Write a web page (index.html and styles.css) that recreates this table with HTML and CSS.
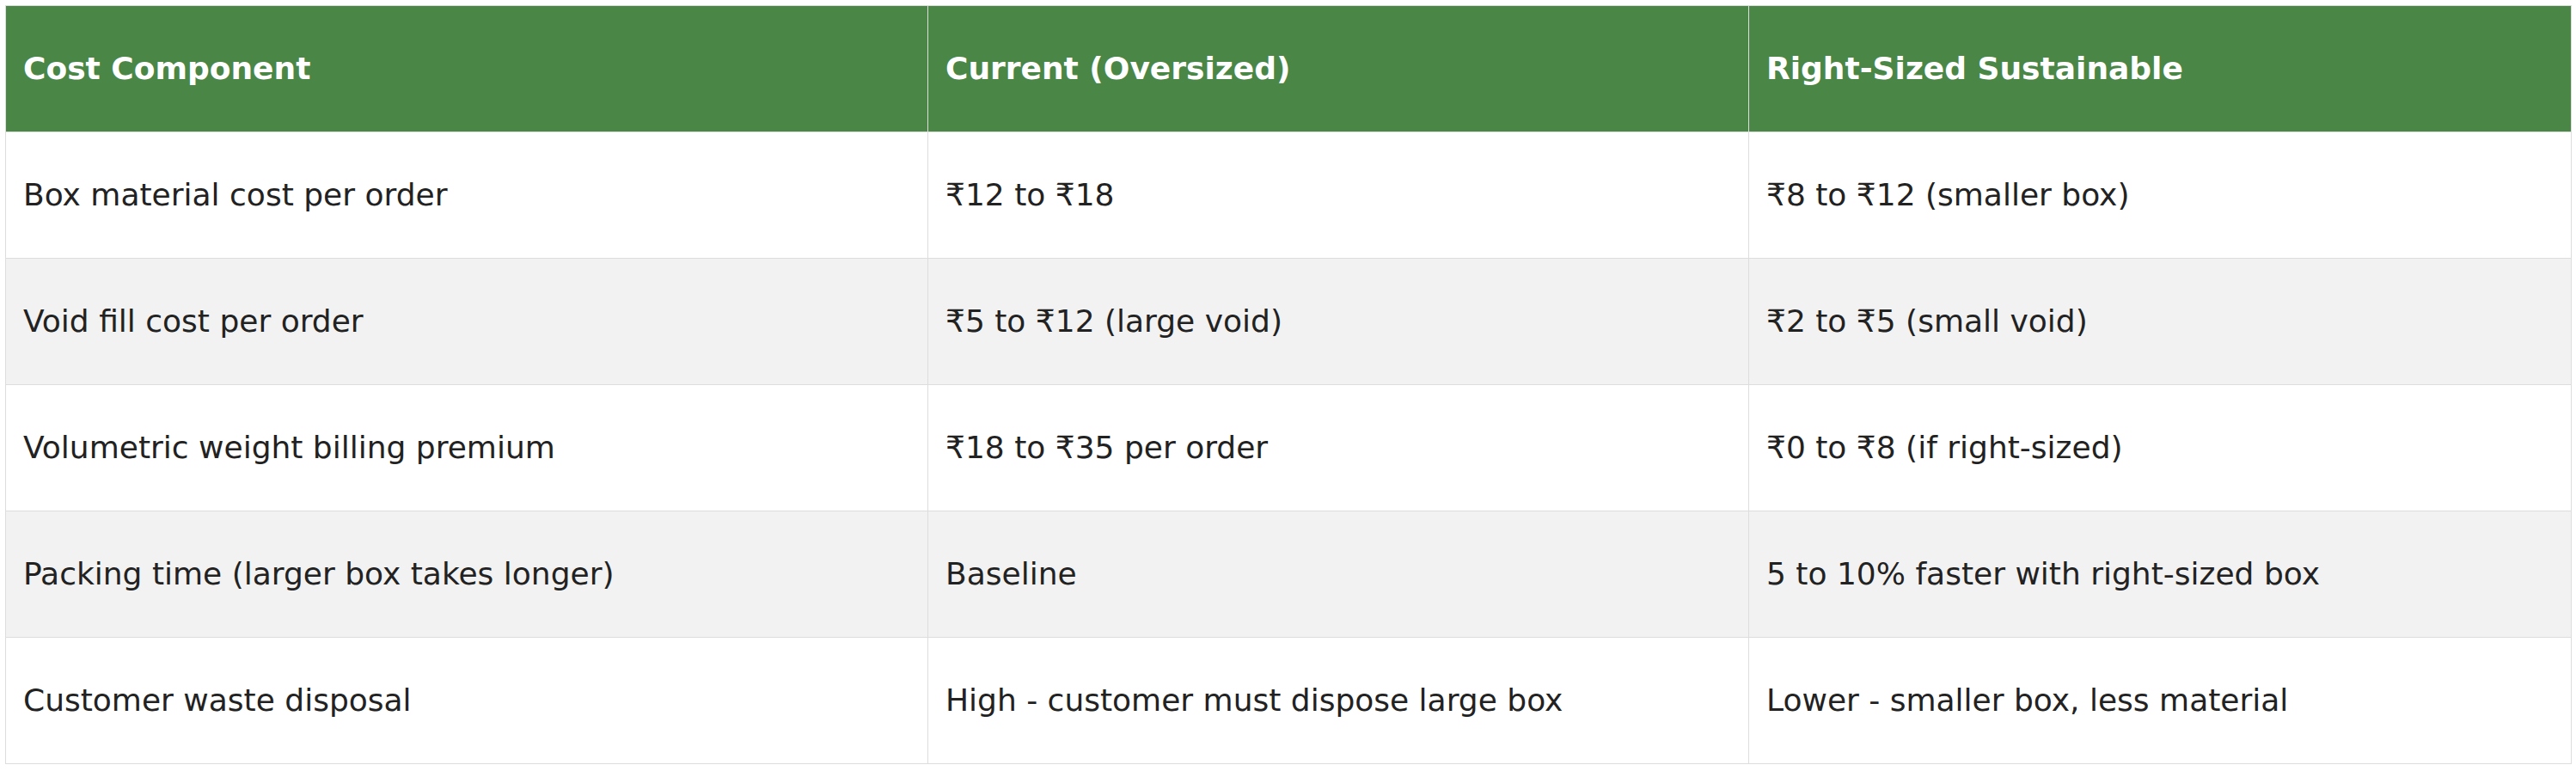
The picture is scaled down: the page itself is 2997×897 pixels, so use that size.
FILE: index.html
```html
<!DOCTYPE html>
<html>
<head>
<meta charset="utf-8">
<link rel="stylesheet" href="styles.css">
</head>
<body>
<table class="cost-table">
  <colgroup>
    <col class="col-a">
    <col class="col-b">
    <col class="col-c">
  </colgroup>
  <thead>
    <tr>
      <th>Cost Component</th>
      <th>Current (Oversized)</th>
      <th>Right-Sized Sustainable</th>
    </tr>
  </thead>
  <tbody>
    <tr>
      <td>Box material cost per order</td>
      <td>₹12 to ₹18</td>
      <td>₹8 to ₹12 (smaller box)</td>
    </tr>
    <tr>
      <td>Void fill cost per order</td>
      <td>₹5 to ₹12 (large void)</td>
      <td>₹2 to ₹5 (small void)</td>
    </tr>
    <tr>
      <td>Volumetric weight billing premium</td>
      <td>₹18 to ₹35 per order</td>
      <td>₹0 to ₹8 (if right-sized)</td>
    </tr>
    <tr>
      <td>Packing time (larger box takes longer)</td>
      <td>Baseline</td>
      <td>5 to 10% faster with right-sized box</td>
    </tr>
    <tr>
      <td>Customer waste disposal</td>
      <td>High - customer must dispose large box</td>
      <td>Lower - smaller box, less material</td>
    </tr>
  </tbody>
</table>
</body>
</html>
```

FILE: styles.css
```css
html, body {
  margin: 0;
  padding: 0;
  background: #ffffff;
}
body {
  padding: 6px;
  font-family: "DejaVu Sans", sans-serif;
}
.cost-table {
  width: 2985px;
  border-collapse: collapse;
  table-layout: fixed;
  font-size: 36px;
  line-height: 42px;
  color: #222222;
}
.col-a { width: 1073px; }
.col-b { width: 955px; }
.col-c { width: 957px; }
.cost-table th,
.cost-table td {
  border: 1px solid #dddddd;
  padding: 52px 20px;
  text-align: left;
  vertical-align: middle;
  white-space: nowrap;
}
.cost-table th {
  background: #4a8646;
  color: #ffffff;
  font-weight: bold;
}
.cost-table tbody tr:nth-child(even) td {
  background: #f2f2f2;
}
```
